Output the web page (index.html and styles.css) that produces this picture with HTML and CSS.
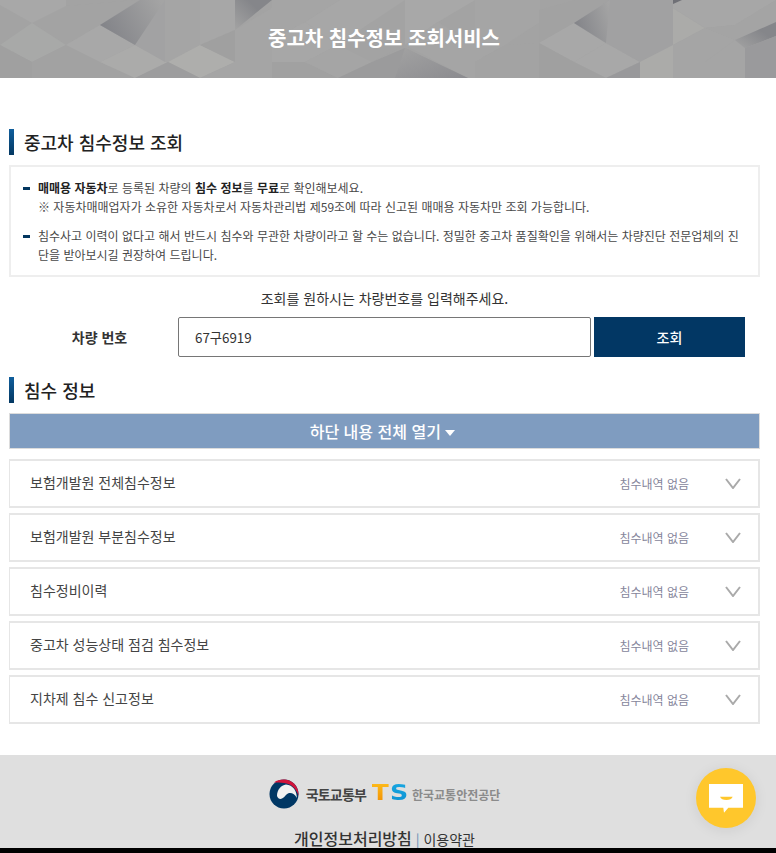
FILE: index.html
```html
<!DOCTYPE html>
<html lang="ko">
<head>
    <meta charset="UTF-8">
    <meta name="viewport" content="width=device-width, initial-scale=1.0">
    <title>중고차 침수정보 조회서비스</title>
    <link rel="stylesheet" href="styles.css">
</head>
<body>
    <div class="page">
        <header class="hero">
            <svg class="hero-bg" viewBox="0 0 776 78" preserveAspectRatio="none" aria-hidden="true">
                <defs>
                    <linearGradient id="shadeA" x1="0" y1="0.6" x2="1" y2="0.2">
                        <stop offset="0" stop-color="#828388"/>
                        <stop offset="1" stop-color="#a4a4a4"/>
                    </linearGradient>
                    <linearGradient id="shadeB" x1="0" y1="1" x2="0.7" y2="0.4">
                        <stop offset="0" stop-color="#a3a3a3"/>
                        <stop offset="1" stop-color="#85868a"/>
                    </linearGradient>
                    <linearGradient id="shadeC" x1="0" y1="0" x2="1" y2="1">
                        <stop offset="0" stop-color="#a2a2a2"/>
                        <stop offset="1" stop-color="#8b8b8f"/>
                    </linearGradient>
                </defs>
                <rect width="776" height="78" fill="#a3a3a3"/>
                <!-- left -->
                <polygon points="0,0 66,0 66,6 32,23 0,5" fill="#a8a8a8"/>
                <polygon points="0,45 32,23 66,45 32,62" fill="#a8a9a8"/>
                <polygon points="0,45 32,62 32,78 0,78" fill="#a0a0a0"/>
                <polygon points="32,62 66,45 100,62 135,78 32,78" fill="#a2a2a2"/>
                <polygon points="66,6 135,0 100,25 66,45" fill="#a3a3a3"/>
                <polygon points="66,45 100,25 135,45 100,62" fill="#a8a8a8"/>
                <polygon points="100,62 135,45 168,62 135,78" fill="#ababaa"/>
                <polygon points="100,25 140,0 165,0 165,62 135,45" fill="#a2a2a3"/>
                <polygon points="100,25 140,0 165,0 135,45" fill="url(#shadeA)"/>
                <polygon points="165,0 200,0 200,45 168,62 165,62" fill="#a5a5a5"/>
                <polygon points="168,62 200,45 235,62 200,78" fill="#aeaeac"/>
                <polygon points="135,78 168,62 200,78" fill="#9d9d9e"/>
                <polygon points="200,0 235,0 235,30 200,45" fill="#a7a7a7"/>
                <polygon points="235,30 272,0 235,0" fill="url(#shadeB)"/>
                <polygon points="200,45 235,30 235,62" fill="#a0a0a0"/>
                <polygon points="235,30 272,8 272,78 200,78 235,62" fill="#a5a5a5"/>
                <!-- center -->
                <polygon points="272,0 340,0 305,22 272,40" fill="#a5a5a5"/>
                <polygon points="272,40 305,22 338,45 305,62 272,62" fill="#a7a7a7"/>
                <polygon points="272,62 305,62 338,78 272,78" fill="#a1a1a1"/>
                <polygon points="340,0 405,0 372,22 338,45 305,22" fill="#a7a7a7"/>
                <polygon points="338,45 372,22 405,45 372,62" fill="#a3a3a3"/>
                <polygon points="305,62 338,45 372,62 338,78" fill="#a5a5a5"/>
                <polygon points="338,78 372,62 405,48 468,78" fill="#9b9b9c"/>
                <polygon points="405,0 475,0 438,22 405,45" fill="#a8a8a8"/>
                <polygon points="405,45 438,22 475,45 475,78 468,78" fill="#a5a5a5"/>
                <polygon points="405,48 468,78 395,78" fill="url(#shadeC)"/>
                <!-- right -->
                <polygon points="475,0 540,0 540,22 505,45 475,62" fill="#a5a5a5"/>
                <polygon points="475,62 505,45 539,43 539,78 475,78" fill="#a3a3a3"/>
                <polygon points="539,10 575,0 610,0 574,23 539,43" fill="#a2a2a2"/>
                <polygon points="539,43 574,23 606,43 574,62" fill="#a8a8a8"/>
                <polygon points="574,62 606,43 640,62 606,78" fill="#a8a8a8"/>
                <polygon points="539,43 574,62 606,78 539,78" fill="#a0a0a0"/>
                <polygon points="574,23 610,0 673,0 673,45 640,62 606,43" fill="#a1a1a2"/>
                <polygon points="574,23 610,0 606,43" fill="url(#shadeA)"/>
                <polygon points="640,62 673,45 673,78 640,78" fill="#ababa9"/>
                <polygon points="606,78 640,62 640,78" fill="#99999b"/>
                <polygon points="673,8 705,28 673,45" fill="#ababa9"/>
                <polygon points="673,0 776,0 735,25 705,28 673,8" fill="#a7a7a7"/>
                <polygon points="673,0 682,0 673,4" fill="#6f7076"/>
                <polygon points="673,45 705,28 735,40 705,62 705,78 673,78" fill="#a5a5a5"/>
                <polygon points="735,25 776,0 776,25 735,40 705,28" fill="#a4a4a4"/>
                <polygon points="705,62 735,40 745,48 745,78 705,78" fill="#a5a5a5"/>
                <polygon points="735,40 776,22 776,36 745,48" fill="url(#shadeB)"/>
                <polygon points="745,48 776,36 776,78 745,78" fill="#9a9a9c"/>
            </svg>
            <h1 class="hero-title">중고차 침수정보 조회서비스</h1>
        </header>

        <main class="content">
            <h2 class="section-title">중고차 침수정보 조회</h2>
            <div class="notice">
                <ul class="notice-list">
                    <li>
                        <strong>매매용 자동차</strong>로 등록된 차량의 <strong>침수 정보</strong>를 <strong>무료</strong>로 확인해보세요.<br>
                        ※ 자동차매매업자가 소유한 자동차로서 자동차관리법 제59조에 따라 신고된 매매용 자동차만 조회 가능합니다.
                    </li>
                    <li>
                        침수사고 이력이 없다고 해서 반드시 침수와 무관한 차량이라고 할 수는 없습니다. 정밀한 중고차 품질확인을 위해서는 차량진단 전문업체의 진단을 받아보시길 권장하여 드립니다.
                    </li>
                </ul>
            </div>
            <p class="search-help">조회를 원하시는 차량번호를 입력해주세요.</p>
            <form class="search-form">
                <label class="search-label" for="car-no">차량 번호</label>
                <input class="search-input" id="car-no" type="text" value="67구6919">
                <button class="search-button" type="button">조회</button>
            </form>

            <h2 class="section-title section-title-result">침수 정보</h2>
            <button class="open-all" type="button">하단 내용 전체 열기 <span class="open-all-arrow"></span></button>
            <div class="accordion">
                <div class="accordion-row">
                    <span class="accordion-name">보험개발원 전체침수정보</span>
                    <span class="accordion-status">침수내역 없음</span>
                    <svg class="chevron" viewBox="0 0 16 11" aria-hidden="true"><path d="M1 1l7 9 7-9"/></svg>
                </div>
                <div class="accordion-row">
                    <span class="accordion-name">보험개발원 부분침수정보</span>
                    <span class="accordion-status">침수내역 없음</span>
                    <svg class="chevron" viewBox="0 0 16 11" aria-hidden="true"><path d="M1 1l7 9 7-9"/></svg>
                </div>
                <div class="accordion-row">
                    <span class="accordion-name">침수정비이력</span>
                    <span class="accordion-status">침수내역 없음</span>
                    <svg class="chevron" viewBox="0 0 16 11" aria-hidden="true"><path d="M1 1l7 9 7-9"/></svg>
                </div>
                <div class="accordion-row">
                    <span class="accordion-name">중고차 성능상태 점검 침수정보</span>
                    <span class="accordion-status">침수내역 없음</span>
                    <svg class="chevron" viewBox="0 0 16 11" aria-hidden="true"><path d="M1 1l7 9 7-9"/></svg>
                </div>
                <div class="accordion-row">
                    <span class="accordion-name">지차제 침수 신고정보</span>
                    <span class="accordion-status">침수내역 없음</span>
                    <svg class="chevron" viewBox="0 0 16 11" aria-hidden="true"><path d="M1 1l7 9 7-9"/></svg>
                </div>
            </div>
        </main>

        <footer class="footer">
            <div class="footer-logos">
                <svg class="molit-mark" viewBox="0 0 30 30" aria-hidden="true">
                    <circle cx="15" cy="15" r="14.500" fill="#003764"/>
                    <path d="M8 17C8 11 12 6 17 5.500 24 6 28 12 27.800 19 26 15 23 13.500 20 14 17 15 16 18 13 19.500 11 20.500 9 19.500 8 17z" fill="#f1f1f1"/>
                    <path d="M5 3.500C9 .5 14 0 18.500 1 25 2.500 30 9 29.500 17 27.500 9.500 22 4.500 15 4 11 3.700 8 4 5 3.500z" fill="#d2143a"/>
                </svg>
                <span class="molit-name">국토교통부</span>
                <span class="ts-mark"><span class="ts-t">T</span><span class="ts-s">S</span></span>
                <span class="ts-name">한국교통안전공단</span>
            </div>
            <div class="footer-links"><strong>개인정보처리방침</strong> <span class="footer-sep">|</span> <span>이용약관</span></div>
        </footer>

        <button class="chat-button" type="button" aria-label="chat">
            <svg viewBox="0 0 34 29" aria-hidden="true">
                <path d="M0 0h34v23.700H19.300L15 28.700l-.7-5H0z" fill="#fff"/>
                <path d="M11 12.700h12.700c-1 2.300-3 3.300-6.300 3.300s-5.400-1-6.400-3.300z" fill="#ffc72c"/>
            </svg>
        </button>
        <div class="bottom-strip"></div>
    </div>
</body>
</html>
```

FILE: styles.css
```css
* {
    box-sizing: border-box;
}
html, body {
    margin: 0;
    padding: 0;
    height: 100%;
}
body {
    font-family: 'Noto Sans CJK KR', 'Noto Sans', sans-serif;
    color: #333;
    background: #fff;
    overflow: hidden;
}
.page {
    position: relative;
    height: 853px;
    overflow: hidden;
}
.hero {
    position: relative;
    height: 78px;
    padding-right: 8px;
    display: flex;
    justify-content: center;
    align-items: center;
    overflow: hidden;
}
.hero-bg {
    position: absolute;
    left: 0;
    top: 0;
    width: 100%;
    height: 100%;
}
.hero-title {
    position: relative;
    margin: 0 0 4px;
    color: #fff;
    font-size: 20px;
    font-weight: 700;
    letter-spacing: 0;
}
.content {
    padding: 51px 16px 0 9px;
}
.section-title {
    margin: 0;
    height: 26px;
    padding-left: 10px;
    border-left: 5px solid #0a4f86;
    border-image: linear-gradient(#11609f, #03365f) 1;
    font-size: 18px;
    font-weight: 500;
    line-height: 26px;
    color: #222;
}
.notice {
    margin-top: 10px;
    height: 112px;
    padding: 12px 11px 0 11px;
    border: 2px solid #eee;
}
.notice-list {
    margin: 0;
    padding: 0;
    list-style: none;
    font-size: 12px;
    line-height: 18.500px;
    color: #484848;
}
.notice-list li {
    position: relative;
    padding-left: 16px;
    margin-bottom: 11px;
}
.notice-list li::before {
    content: "";
    position: absolute;
    left: 1px;
    top: 8px;
    width: 7px;
    height: 3px;
    background: #03365f;
}
.notice-list strong {
    font-weight: 700;
    color: #222;
}
.search-help {
    margin: 11px 0 0;
    text-align: center;
    font-size: 14px;
    line-height: 20px;
    color: #333;
}
.search-form {
    display: flex;
    align-items: stretch;
    gap: 3px;
    height: 40px;
    margin-top: 9px;
}
.search-label {
    width: 169px;
    padding-left: 12px;
    margin-right: -3px;
    text-align: center;
    font-size: 14px;
    font-weight: 700;
    line-height: 40px;
    color: #333;
}
.search-input {
    width: 413px;
    padding: 0 16px;
    border: 1px solid #767676;
    border-radius: 2px;
    font-family: inherit;
    font-size: 13.330px;
    color: #333;
}
.search-button {
    width: 151px;
    border: none;
    background: #023764;
    color: #fff;
    font-family: inherit;
    font-size: 14px;
    font-weight: 500;
}
.section-title-result {
    margin-top: 20px;
}
.open-all {
    display: block;
    width: 100%;
    height: 36px;
    margin-top: 10px;
    border: 1px solid #dcdcdc;
    background: #7f9cc0;
    color: #fff;
    font-family: inherit;
    font-size: 16px;
    font-weight: 500;
    padding: 0 4px 0 0;
}
.open-all-arrow {
    display: inline-block;
    border-left: 5px solid transparent;
    border-right: 5px solid transparent;
    border-top: 6px solid #fff;
    vertical-align: 2px;
}
.accordion {
    display: flex;
    flex-direction: column;
    gap: 5px;
    margin-top: 10px;
}
.accordion-row {
    display: flex;
    align-items: center;
    height: 49px;
    padding: 0 17px 0 20px;
    border: 2px solid #e6e6e6;
    border-left-width: 1px;
}
.accordion-name {
    flex: 1;
    font-size: 14px;
    color: #444;
    margin-top: -4px;
}
.accordion-status {
    font-size: 12px;
    color: #85859b;
    margin-right: 36px;
}
.chevron {
    width: 16px;
    height: 11px;
    fill: none;
    stroke: #aaa;
    stroke-width: 2;
}
.footer {
    position: absolute;
    left: 0;
    right: 0;
    top: 755px;
    bottom: 0;
    background: #dfdfdf;
    text-align: center;
}
.footer-logos {
    display: flex;
    justify-content: center;
    align-items: center;
    height: 32px;
    margin-top: 23px;
    padding-right: 7px;
}
.molit-mark {
    width: 30px;
    height: 30px;
}
.molit-name {
    margin-left: 7px;
    font-size: 14px;
    font-weight: 700;
    color: #444;
    letter-spacing: -0.800px;
}
.ts-mark {
    display: inline-block;
    margin: -2px 5px 0 8px;
    font-family: 'DejaVu Sans', sans-serif;
    font-size: 22px;
    font-weight: 700;
    line-height: 24px;
    letter-spacing: 1px;
    transform: scaleX(1.150);
}
.ts-t, .ts-s {
    -webkit-background-clip: text;
    background-clip: text;
    color: transparent;
}
.ts-t {
    background-image: linear-gradient(#ffc21f, #f08a00);
}
.ts-s {
    background-image: linear-gradient(#19a9e3, #0d8fd0);
}
.ts-name {
    margin-left: 0;
    font-size: 12px;
    font-weight: 700;
    color: #8b8b8b;
    letter-spacing: 0;
}
.footer-links {
    margin-top: 18px;
    padding-right: 7px;
    font-size: 14px;
    line-height: 20px;
    color: #333;
}
.footer-links strong {
    font-size: 16px;
    font-weight: 500;
}
.footer-sep {
    color: #6a8fb5;
}
.chat-button {
    position: absolute;
    left: 696px;
    top: 768px;
    width: 60px;
    height: 60px;
    padding: 13px;
    border: none;
    border-radius: 50%;
    background: #ffc72c;
    box-shadow: 0 2px 14px rgba(0, 0, 0, 0.08);
    display: flex;
    justify-content: center;
    align-items: center;
}
.chat-button svg {
    width: 34px;
    height: 29px;
    display: block;
}
.bottom-strip {
    position: absolute;
    left: 0;
    right: 0;
    bottom: 0;
    height: 5px;
    background: #000;
}
```
